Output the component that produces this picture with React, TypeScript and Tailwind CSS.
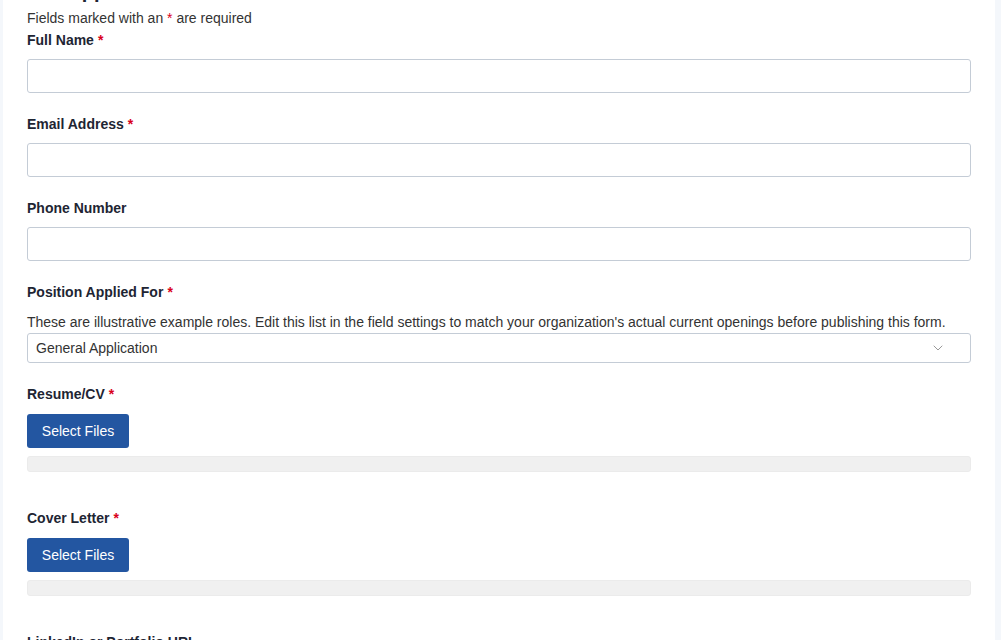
import { ChevronDown } from 'lucide-react';

function Req() {
  return <span className="text-[#d9001b] ml-1">*</span>;
}

function Label({ text, required }: { text: string; required?: boolean }) {
  return (
    <label className="block text-[14px] leading-5 font-bold text-[#1e2533]">
      {text}
      {required && <Req />}
    </label>
  );
}

function TextField({ label, required }: { label: string; required?: boolean }) {
  return (
    <div className="mb-[21px]">
      <Label text={label} required={required} />
      <input
        type="text"
        className="mt-[9px] block w-full h-[34px] rounded-[3px] border border-[#c4ccd6] bg-white px-2 text-[14px] outline-none"
      />
    </div>
  );
}

function FileField({ label, required }: { label: string; required?: boolean }) {
  return (
    <div className="mb-[36px]">
      <Label text={label} required={required} />
      <button className="mt-[10px] h-[34px] w-[102px] rounded-[3px] bg-[#2356a1] text-[14px] text-white">
        Select Files
      </button>
      <div className="mt-[8px] h-[16px] w-full rounded-[3px] bg-[#f0f0f0] border border-[#ebebeb]" />
    </div>
  );
}

export default function App() {
  return (
    <div className="min-h-screen bg-[#f4f7fb] px-[3px] overflow-hidden" style={{ fontFamily: '"Liberation Sans", Arial, sans-serif' }}>
      <div className="bg-white w-[992px] px-[24px] pb-10 -mt-[21px]">
        <h1 className="mb-[5px] text-[20px] leading-[24px] font-bold text-[#1e2533]">Job Application Form</h1>
        <p className="text-[14px] leading-5 text-[#333]">
          Fields marked with an <span className="text-[#d9001b]">*</span> are required
        </p>
        <div className="mt-[2px]">
          <TextField label="Full Name" required />
          <TextField label="Email Address" required />
          <TextField label="Phone Number" />

          <div className="mb-[21px]">
            <Label text="Position Applied For" required />
            <p className="mt-[10px] text-[14px] leading-5 text-[#333]">
              These are illustrative example roles. Edit this list in the field settings to match your organization's actual current openings before publishing this form.
            </p>
            <div className="mt-[1px] relative h-[30px] w-full rounded-[3px] border border-[#c4ccd6] bg-white flex items-center px-2">
              <span className="text-[14px] text-[#333]">General Application</span>
              <ChevronDown size={16} strokeWidth={1.5} className="absolute right-[24px] text-[#999]" />
            </div>
          </div>

          <FileField label="Resume/CV" required />
          <FileField label="Cover Letter" required />
          <TextField label="LinkedIn or Portfolio URL" />
        </div>
      </div>
    </div>
  );
}
